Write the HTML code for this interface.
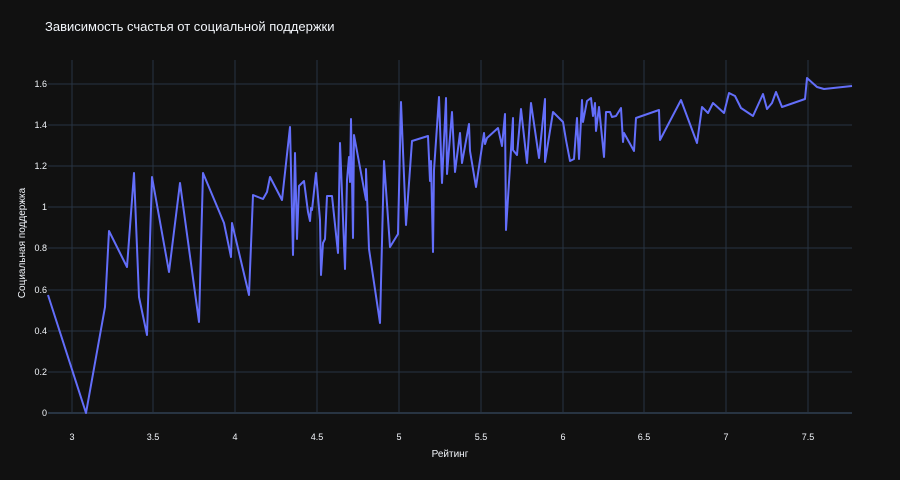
<!DOCTYPE html>
<html><head><meta charset="utf-8"><style>
html,body{margin:0;padding:0;background:#111111;}
svg{display:block;font-family:"Liberation Sans","Noto Sans CJK SC",sans-serif;}
</style></head><body>
<svg width="900" height="480" viewBox="0 0 900 480" xmlns="http://www.w3.org/2000/svg">
<rect width="900" height="480" fill="#111111"/>
<g stroke="#283442" stroke-width="1">
<line x1="72" y1="60" x2="72" y2="413"/><line x1="153" y1="60" x2="153" y2="413"/><line x1="235" y1="60" x2="235" y2="413"/><line x1="317" y1="60" x2="317" y2="413"/><line x1="399" y1="60" x2="399" y2="413"/><line x1="481" y1="60" x2="481" y2="413"/><line x1="563" y1="60" x2="563" y2="413"/><line x1="644" y1="60" x2="644" y2="413"/><line x1="726" y1="60" x2="726" y2="413"/><line x1="808" y1="60" x2="808" y2="413"/>
<line x1="48" y1="372" x2="852" y2="372"/><line x1="48" y1="331" x2="852" y2="331"/><line x1="48" y1="290" x2="852" y2="290"/><line x1="48" y1="248" x2="852" y2="248"/><line x1="48" y1="207" x2="852" y2="207"/><line x1="48" y1="166" x2="852" y2="166"/><line x1="48" y1="125" x2="852" y2="125"/><line x1="48" y1="84" x2="852" y2="84"/>
</g>
<line x1="48" y1="413" x2="852" y2="413" stroke="#283442" stroke-width="2"/>
<polyline fill="none" stroke="#636efa" stroke-width="2" stroke-linejoin="round" points="48,295 86,413 105,307 109,231 127,267 134,173 139,297 147,335 152,177 169,272 180,183 199,322 203,173 224,223 231,257 232,223 249,295 253,195 263,199 267,192 270,177 282,200 290,127 293,255 295,153 297,239 299,186 304,181 308,212 310,221 311,208 312,210 316,173 320,220 321,275 323,243 325,239 327,196 332,196 338,253 340,143 345,269 347,180 349,157 350,182 351,119 353,238 354,135 366,200 366,169 369,249 380,323 384,161 390,247 398,234 401,102 406,225 412,141 428,136 430,181 431,161 433,252 434,170 439,97 442,183 446,98 447,174 452,112 455,172 460,133 462,163 469,124 470,151 476,187 484,133 485,144 487,138 498,128 502,146 505,114 506,230 513,118 513,150 517,155 521,109 527,163 531,103 539,158 545,99 545,162 553,112 563,122 566,140 570,161 574,159 577,118 579,159 582,100 583,122 587,101 591,98 593,116 595,103 596,131 599,107 604,157 606,112 610,112 612,117 616,116 621,108 623,142 624,133 634,151 636,118 659,110 660,140 681,100 697,143 702,107 708,113 713,103 724,113 729,93 735,96 741,108 753,116 763,94 767,109 772,103 776,92 782,107 805,99 807,78 817,87 824,89 852,86"/>
<text x="45" y="31" font-size="13" fill="#f2f5fa">Зависимость счастья от социальной поддержки</text>
<g font-size="9" fill="#f2f5fa" text-anchor="end">
<text x="47" y="416">0</text><text x="47" y="375">0.2</text><text x="47" y="334">0.4</text><text x="47" y="293">0.6</text><text x="47" y="251">0.8</text><text x="47" y="210">1</text><text x="47" y="169">1.2</text><text x="47" y="128">1.4</text><text x="47" y="87">1.6</text>
</g>
<g font-size="9" fill="#f2f5fa" text-anchor="middle">
<text x="72" y="440">3</text><text x="153" y="440">3.5</text><text x="235" y="440">4</text><text x="317" y="440">4.5</text><text x="399" y="440">5</text><text x="481" y="440">5.5</text><text x="563" y="440">6</text><text x="644" y="440">6.5</text><text x="726" y="440">7</text><text x="808" y="440">7.5</text>
</g>
<text x="450" y="457" font-size="10" fill="#f2f5fa" text-anchor="middle">Рейтинг</text>
<text transform="translate(25,243) rotate(-90)" font-size="10" fill="#f2f5fa" text-anchor="middle">Социальная поддержка</text>
</svg>
</body></html>
